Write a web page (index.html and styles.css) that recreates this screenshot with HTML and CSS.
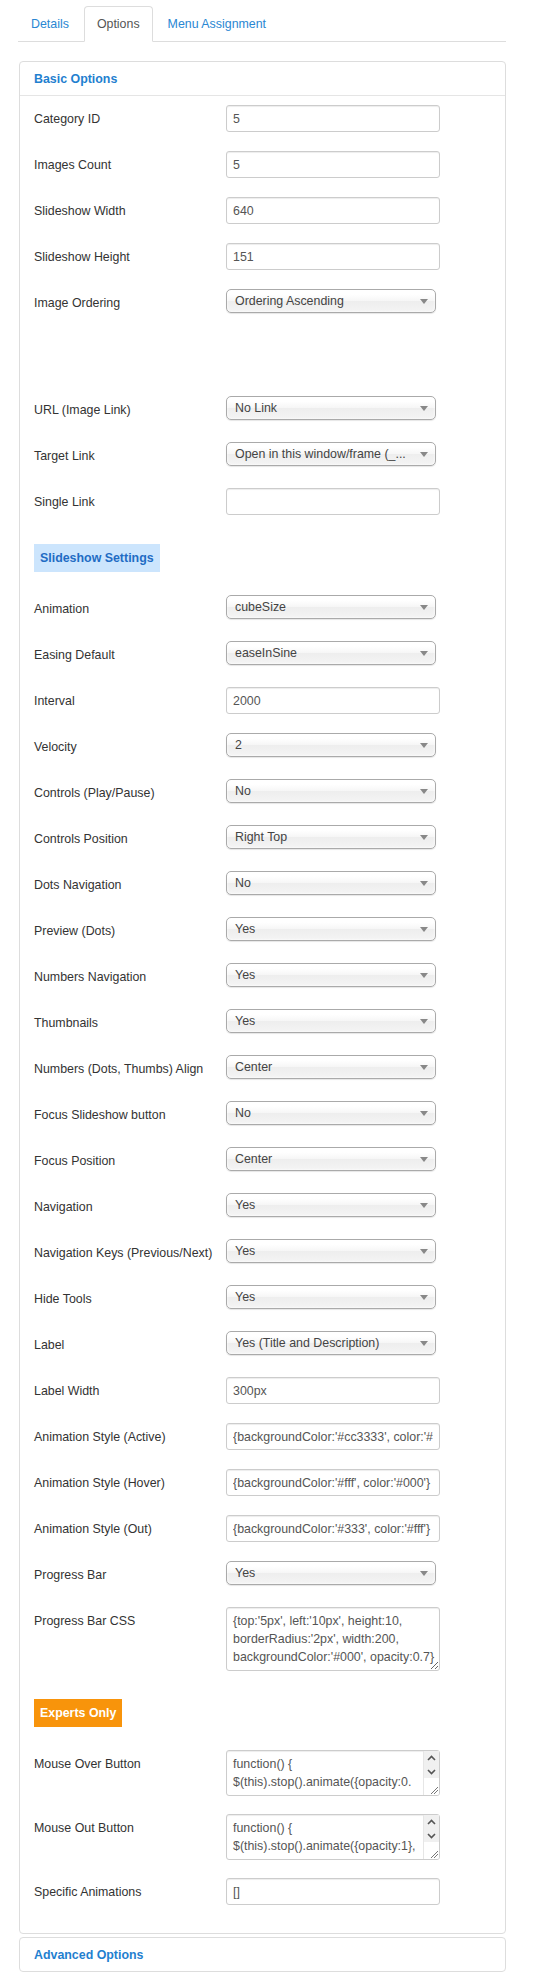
FILE: index.html
```html
<!DOCTYPE html>
<html>
<head>
<meta charset="utf-8">
<title>Options</title>
<link rel="stylesheet" href="styles.css">
</head>
<body>
<div class="page">
  <ul class="tabs">
    <li><a class="tab">Details</a></li>
    <li><a class="tab active">Options</a></li>
    <li><a class="tab">Menu Assignment</a></li>
  </ul>

  <div class="panel">
    <div class="panel-head">Basic Options</div>
    <div class="panel-body">
      <div class="row"><div class="lbl">Category ID</div><input class="inp" type="text" value="5"></div>
      <div class="row"><div class="lbl">Images Count</div><input class="inp" type="text" value="5"></div>
      <div class="row"><div class="lbl">Slideshow Width</div><input class="inp" type="text" value="640"></div>
      <div class="row"><div class="lbl">Slideshow Height</div><input class="inp" type="text" value="151"></div>
      <div class="row"><div class="lbl">Image Ordering</div><div class="sel">Ordering Ascending</div></div>
      <div class="row row-empty"></div>
      <div class="row"><div class="lbl">URL (Image Link)</div><div class="sel">No Link</div></div>
      <div class="row"><div class="lbl">Target Link</div><div class="sel">Open in this window/frame (_...</div></div>
      <div class="row"><div class="lbl">Single Link</div><input class="inp" type="text" value=""></div>

      <div class="section"><span class="badge badge-info">Slideshow Settings</span></div>

      <div class="row"><div class="lbl">Animation</div><div class="sel">cubeSize</div></div>
      <div class="row"><div class="lbl">Easing Default</div><div class="sel">easeInSine</div></div>
      <div class="row"><div class="lbl">Interval</div><input class="inp" type="text" value="2000"></div>
      <div class="row"><div class="lbl">Velocity</div><div class="sel">2</div></div>
      <div class="row"><div class="lbl">Controls (Play/Pause)</div><div class="sel">No</div></div>
      <div class="row"><div class="lbl">Controls Position</div><div class="sel">Right Top</div></div>
      <div class="row"><div class="lbl">Dots Navigation</div><div class="sel">No</div></div>
      <div class="row"><div class="lbl">Preview (Dots)</div><div class="sel">Yes</div></div>
      <div class="row"><div class="lbl">Numbers Navigation</div><div class="sel">Yes</div></div>
      <div class="row"><div class="lbl">Thumbnails</div><div class="sel">Yes</div></div>
      <div class="row"><div class="lbl">Numbers (Dots, Thumbs) Align</div><div class="sel">Center</div></div>
      <div class="row"><div class="lbl">Focus Slideshow button</div><div class="sel">No</div></div>
      <div class="row"><div class="lbl">Focus Position</div><div class="sel">Center</div></div>
      <div class="row"><div class="lbl">Navigation</div><div class="sel">Yes</div></div>
      <div class="row"><div class="lbl">Navigation Keys (Previous/Next)</div><div class="sel">Yes</div></div>
      <div class="row"><div class="lbl">Hide Tools</div><div class="sel">Yes</div></div>
      <div class="row"><div class="lbl">Label</div><div class="sel">Yes (Title and Description)</div></div>
      <div class="row"><div class="lbl">Label Width</div><input class="inp" type="text" value="300px"></div>
      <div class="row"><div class="lbl">Animation Style (Active)</div><input class="inp" type="text" value="{backgroundColor:'#cc3333', color:'#fff'}"></div>
      <div class="row"><div class="lbl">Animation Style (Hover)</div><input class="inp" type="text" value="{backgroundColor:'#fff', color:'#000'}"></div>
      <div class="row"><div class="lbl">Animation Style (Out)</div><input class="inp" type="text" value="{backgroundColor:'#333', color:'#fff'}"></div>
      <div class="row"><div class="lbl">Progress Bar</div><div class="sel">Yes</div></div>
      <div class="row row-ta3"><div class="lbl">Progress Bar CSS</div><textarea class="ta ta3">{top:'5px', left:'10px', height:10,
borderRadius:'2px', width:200,
backgroundColor:'#000', opacity:0.7}</textarea></div>

      <div class="section"><span class="badge badge-warn">Experts Only</span></div>

      <div class="row row-ta2"><div class="lbl">Mouse Over Button</div>
        <div class="ta-wrap">
          <textarea class="ta ta2">function() {
$(this).stop().animate({opacity:0.
5}, 300);
}</textarea>
          <div class="sb">
            <div class="sb-btn sb-up"><svg width="9" height="6" viewBox="0 0 9 6"><polyline points="1,5 4.5,1.5 8,5" fill="none" stroke="#555" stroke-width="1.6"/></svg></div>
            <div class="sb-btn sb-down"><svg width="9" height="6" viewBox="0 0 9 6"><polyline points="1,1 4.5,4.5 8,1" fill="none" stroke="#555" stroke-width="1.6"/></svg></div>
            <div class="sb-track"><svg class="grip" width="9" height="9" viewBox="0 0 9 9"><line x1="2" y1="9" x2="9" y2="2" stroke="#777" stroke-width="1"/><line x1="5" y1="9" x2="9" y2="5" stroke="#777" stroke-width="1"/></svg></div>
          </div>
        </div>
      </div>
      <div class="row row-ta2"><div class="lbl">Mouse Out Button</div>
        <div class="ta-wrap">
          <textarea class="ta ta2">function() {
$(this).stop().animate({opacity:1},
300);
}</textarea>
          <div class="sb">
            <div class="sb-btn sb-up"><svg width="9" height="6" viewBox="0 0 9 6"><polyline points="1,5 4.5,1.5 8,5" fill="none" stroke="#555" stroke-width="1.6"/></svg></div>
            <div class="sb-btn sb-down"><svg width="9" height="6" viewBox="0 0 9 6"><polyline points="1,1 4.5,4.5 8,1" fill="none" stroke="#555" stroke-width="1.6"/></svg></div>
            <div class="sb-track"><svg class="grip" width="9" height="9" viewBox="0 0 9 9"><line x1="2" y1="9" x2="9" y2="2" stroke="#777" stroke-width="1"/><line x1="5" y1="9" x2="9" y2="5" stroke="#777" stroke-width="1"/></svg></div>
          </div>
        </div>
      </div>
      <div class="row"><div class="lbl">Specific Animations</div><input class="inp" type="text" value="[]"></div>
    </div>
  </div>

  <div class="panel panel-closed">
    <div class="panel-head">Advanced Options</div>
  </div>
</div>
</body>
</html>
```

FILE: styles.css
```css
* { box-sizing: border-box; }

html, body {
  margin: 0;
  padding: 0;
  background: #fff;
}

body {
  font-family: "Liberation Sans", Arial, sans-serif;
  font-size: 12.4px;
  line-height: 18px;
  color: #333;
}

.page {
  margin-left: 18px;
  width: 488px;
  padding-top: 6px;
}

/* Tabs */
.tabs {
  list-style: none;
  margin: 0;
  padding: 0;
  display: flex;
  border-bottom: 1px solid #ddd;
}

.tab {
  display: block;
  padding: 8px 12px;
  line-height: 18px;
  margin-right: 2px;
  margin-bottom: -1px;
  border: 1px solid transparent;
  border-radius: 4px 4px 0 0;
  color: #2a87d3;
}

.tab.active {
  color: #555;
  background: #fff;
  border-color: #ddd;
  border-bottom-color: #fff;
}

/* Panels */
.panel {
  margin: 19px 0 0 1px;
  width: 487px;
  border: 1px solid #ddd;
  border-radius: 4px;
  background: #fff;
}

.panel-closed {
  margin-top: 3px;
}

.panel-head {
  padding: 8px 14px 7px;
  line-height: 18px;
  font-weight: bold;
  color: #1f80cf;
  border-bottom: 1px solid #e5e5e5;
}

.panel-closed .panel-head {
  border-bottom: 0;
}

.panel-body {
  padding: 9px 14px 9px;
}

/* Rows */
.row {
  display: flex;
  align-items: flex-start;
  height: 28px;
  margin-bottom: 18px;
}

.row-empty { height: 43px; }
.row-ta3 { height: 64px; }
.row-ta2 { height: 46px; }

.lbl {
  width: 192px;
  flex: none;
  padding-top: 5px;
  line-height: 18px;
  color: #333;
  white-space: nowrap;
}

.inp {
  width: 214px;
  height: 27px;
  margin: 0;
  padding: 4px 6px;
  border: 1px solid #ccc;
  border-radius: 3px;
  box-shadow: inset 0 1px 1px rgba(0, 0, 0, 0.075);
  font-family: "Liberation Sans", Arial, sans-serif;
  font-size: 12.4px;
  line-height: 17px;
  color: #555;
  background: #fff;
}

.sel {
  position: relative;
  width: 210px;
  height: 24px;
  padding: 0 22px 0 8px;
  border: 1px solid #aaa;
  border-radius: 5px;
  background: linear-gradient(#fff 20%, #f6f6f6 50%, #eee 52%, #f4f4f4 100%);
  box-shadow: inset 0 0 3px #fff, 0 1px 1px rgba(0, 0, 0, 0.1);
  line-height: 22px;
  color: #444;
  white-space: nowrap;
  overflow: hidden;
}

.sel::after {
  content: "";
  position: absolute;
  right: 7px;
  top: 9px;
  border-left: 4px solid transparent;
  border-right: 4px solid transparent;
  border-top: 5px solid #888;
}

/* Textareas */
.ta {
  display: block;
  width: 214px;
  margin: 0;
  padding: 4px 6px;
  border: 1px solid #ccc;
  border-radius: 3px;
  box-shadow: inset 0 1px 1px rgba(0, 0, 0, 0.075);
  font-family: "Liberation Sans", Arial, sans-serif;
  font-size: 12.4px;
  line-height: 18px;
  color: #555;
  background: #fff;
  white-space: pre;
  overflow: hidden;
}

.ta3 { height: 64px; }
.ta2 { height: 46px; resize: none; }

.ta-wrap {
  position: relative;
  width: 214px;
  height: 46px;
}

.sb {
  position: absolute;
  top: 1px;
  right: 1px;
  bottom: 1px;
  width: 16px;
  background: #fff;
  border-left: 1px solid #e6e6e6;
  display: flex;
  flex-direction: column;
  border-radius: 0 2px 2px 0;
}

.sb-btn {
  display: flex;
  align-items: center;
  justify-content: center;
  background: #f0f0f0;
}

.sb-up { height: 14px; }
.sb-down { height: 13px; }

.sb-track {
  flex: 1;
  position: relative;
}

.grip {
  position: absolute;
  right: 1px;
  bottom: 1px;
}

/* Section badges */
.section {
  display: flex;
  padding-top: 10px;
  margin-bottom: 23px;
}

.badge {
  display: block;
  padding: 5px 6px;
  line-height: 18px;
  font-weight: bold;
}

.badge-info {
  background: #cce5fd;
  color: #1f6cc4;
}

.badge-warn {
  background: #f8940b;
  color: #fff;
}
```
